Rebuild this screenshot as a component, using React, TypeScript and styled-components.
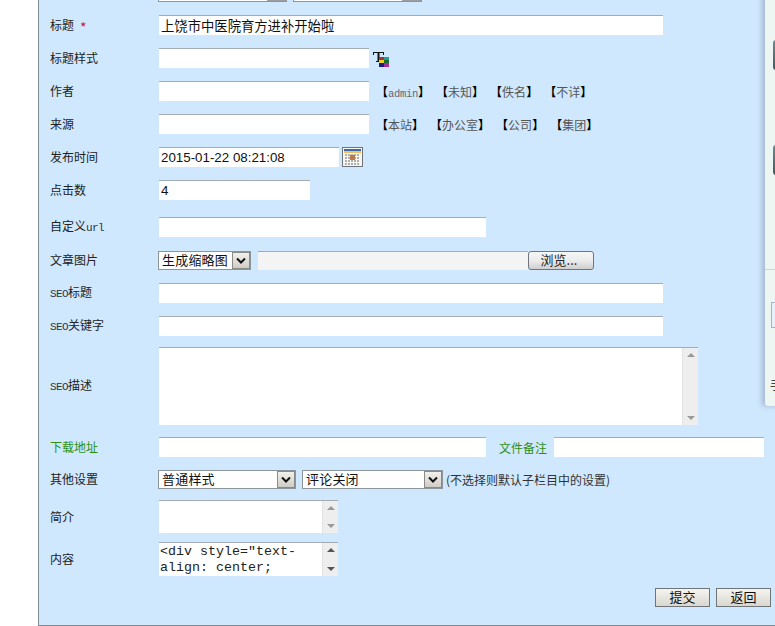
import React from 'react';
import styled, { createGlobalStyle } from 'styled-components';

const cjk = `"Noto Sans CJK SC", "Liberation Sans", sans-serif`;

const GlobalStyle = createGlobalStyle`
  html, body {
    margin: 0;
    padding: 0;
    background: #fff;
    overflow: hidden;
  }
  #root {
    height: 626px;
    overflow: hidden;
  }
`;

const Page = styled.div`
  position: relative;
  width: 775px;
  height: 626px;
  padding-left: 38px;
  box-sizing: border-box;
  overflow: hidden;
  font-family: ${cjk};
  font-size: 12px;
  color: #222;
`;

const Panel = styled.form`
  height: 626px;
  margin: 0;
  box-sizing: border-box;
  background: #d0e8fd;
  border-left: 1px solid #7f8a94;
  border-bottom: 1px solid #7f8a94;
  padding-left: 11px;
  overflow: hidden;
`;

const ClippedRow = styled.div`
  display: flex;
  gap: 6px;
  height: 15px;
  margin-top: -13px;
  margin-left: 108px;
`;

const ClippedSelect = styled.div`
  width: 129px;
  height: 15px;
  box-sizing: border-box;
  background: #fff;
  border: 1px solid #8c949c;
  display: flex;
  justify-content: flex-end;
`;

const ClippedArrow = styled.div`
  width: 19px;
  background: #9a9ea3;
`;

const Row = styled.div<{ $h: number; $mt?: number }>`
  display: flex;
  align-items: center;
  height: ${(p) => p.$h}px;
  margin-top: ${(p) => p.$mt ?? 13}px;
`;

const Label = styled.label<{ $green?: boolean; $up?: boolean }>`
  width: 109px;
  flex: none;
  line-height: 16px;
  margin-top: ${(p) => (p.$up ? -2 : 0)}px;
  color: ${(p) => (p.$green ? '#2f8f12' : '#222')};
`;

const Latin = styled.span`
  font-family: "Liberation Mono", monospace;
  font-size: 11px;
  letter-spacing: -0.6px;
  color: #2c3440;
`;

const Star = styled.span`
  display: inline-block;
  margin-left: 6px;
  font-size: 14px;
  line-height: 12px;
  color: #d0104c;
  transform: translateY(3px);
`;

const Field = styled.input<{ $w: number }>`
  width: ${(p) => p.$w}px;
  height: 20px;
  flex: none;
  box-sizing: border-box;
  padding: 0 2px;
  margin: 0;
  background: #fff;
  border: none;
  border-top: 1px solid #a3acb5;
  outline: none;
  font-family: "Liberation Sans", "Noto Sans CJK SC", sans-serif;
  font-size: 13.33px;
  color: #111;
`;

const TitleField = styled(Field)`
  font-family: ${cjk};
`;

const Hints = styled.div`
  display: flex;
  gap: 6px;
  margin-left: 7px;
  color: #555;
  white-space: nowrap;
`;

const Hint = styled.span`
  display: inline-block;
`;

const Bracket = styled.b`
  color: #000;
  font-weight: 700;
`;

const HintLatin = styled.span`
  font-family: "Liberation Mono", monospace;
  font-size: 10.5px;
  letter-spacing: -0.3px;
  color: #667;
`;

const IconSlot = styled.svg<{ $ml: number }>`
  flex: none;
  margin-left: ${(p) => p.$ml}px;
`;

const SelectBox = styled.div<{ $w: number; $ml?: number }>`
  width: ${(p) => p.$w}px;
  height: 19px;
  flex: none;
  margin-left: ${(p) => p.$ml ?? -1}px;
  box-sizing: border-box;
  display: flex;
  align-items: stretch;
  background: #fff;
  border: 1px solid #8c949c;
`;

const SelectText = styled.span`
  flex: 1;
  padding-left: 3px;
  line-height: 16px;
  font-size: 13px;
  letter-spacing: 0.2px;
  color: #111;
  white-space: nowrap;
`;

const SelectArrow = styled.span`
  width: 18px;
  flex: none;
  display: flex;
  align-items: center;
  justify-content: center;
  box-sizing: border-box;
  background: linear-gradient(#f2f0ea, #cfcdc6);
  border: 1px solid #8a8a86;
`;

const FileBox = styled.div`
  width: 270px;
  height: 19px;
  flex: none;
  margin-left: 7px;
  box-sizing: border-box;
  background: #f4f4f4;
  border-top: 1px solid #a3acb5;
`;

const BrowseButton = styled.button`
  width: 66px;
  height: 19px;
  flex: none;
  padding: 0 4px 3px 0;
  box-sizing: border-box;
  border: 1px solid #70767c;
  border-radius: 3px;
  background: linear-gradient(#f6f6f6 0%, #ececec 50%, #cfcfcf 100%);
  font-family: ${cjk};
  font-size: 13px;
  line-height: 15px;
  color: #222;
`;

const AreaWrap = styled.div<{ $w: number; $h: number }>`
  width: ${(p) => p.$w}px;
  height: ${(p) => p.$h}px;
  flex: none;
  display: flex;
  background: #fff;
  border-top: 1px solid #a3acb5;
  box-sizing: border-box;
`;

const Area = styled.textarea`
  flex: 1;
  min-width: 0;
  margin: 0;
  padding: 1px 1px;
  border: none;
  outline: none;
  resize: none;
  overflow: hidden;
  background: #fff;
  font-family: "Liberation Mono", monospace;
  font-size: 13.33px;
  line-height: 16px;
  color: #222;
`;

const Scrollbar = styled.div`
  width: 16px;
  flex: none;
  display: flex;
  flex-direction: column;
  justify-content: space-between;
  align-items: center;
  padding: 5px 0;
  box-sizing: border-box;
  background: #eeeeee;
  border-left: 1px solid #e2e2e2;
`;

const Arrow = styled.i<{ $down?: boolean; $dark?: boolean }>`
  width: 0;
  height: 0;
  border-left: 4px solid transparent;
  border-right: 4px solid transparent;
  ${(p) =>
    p.$down
      ? `border-top: 4px solid ${p.$dark ? '#555' : '#999'};`
      : `border-bottom: 4px solid ${p.$dark ? '#555' : '#999'};`}
`;

const NoteLabel = styled.label`
  width: 48px;
  flex: none;
  margin-left: 13px;
  margin-right: 7px;
  white-space: nowrap;
  color: #2f8f12;
`;

const SelectNote = styled.span`
  margin-left: 3px;
  margin-top: -1px;
  color: #333;
  white-space: nowrap;
`;

const Actions = styled.div`
  display: flex;
  justify-content: flex-end;
  gap: 6px;
  margin-top: 12px;
  padding-right: 4px;
`;

const ActionButton = styled.button`
  width: 55px;
  height: 19px;
  padding: 0 0 2px;
  box-sizing: border-box;
  border: 1px solid #6f7478;
  background: linear-gradient(#f5f4f0, #d9d7d0);
  font-family: ${cjk};
  font-size: 13px;
  line-height: 15px;
  color: #111;
`;

const SidePanel = styled.aside`
  position: absolute;
  top: -4px;
  left: 765px;
  width: 20px;
  height: 410px;
  box-sizing: border-box;
  background: #edf6f2;
  border-radius: 0 0 0 3px;
  box-shadow: -3px 0 5px rgba(120, 140, 170, 0.5);
`;

const SideChip = styled.div<{ $top: number }>`
  position: absolute;
  top: ${(p) => p.$top}px;
  left: 8px;
  width: 10px;
  height: 30px;
  border-radius: 3px 0 0 3px;
  background: linear-gradient(#6f8a92, #3f5a64);
`;

const SideRule = styled.div`
  position: absolute;
  top: 273px;
  left: 0;
  width: 100%;
  height: 1px;
  background: #cfd6d4;
`;

const SideBox = styled.div`
  position: absolute;
  top: 306px;
  left: 6px;
  width: 14px;
  height: 26px;
  box-sizing: border-box;
  background: #e6f1fb;
  border: 1px solid #a3b4c8;
`;

const SideGlyph = styled.span`
  position: absolute;
  top: 382px;
  left: 5px;
  font-size: 12px;
  line-height: 14px;
  color: #444;
`;

const Chevron = () => (
  <svg width="10" height="7" viewBox="0 0 10 7">
    <path d="M1 1.5 L5 5.5 L9 1.5" fill="none" stroke="#111" strokeWidth="2" />
  </svg>
);

const ColorIcon = () => (
  <IconSlot $ml={3} width="17" height="17" viewBox="0 0 17 17">
    <path d="M1 2h11v3h-1V3H7.5v8H9v1H4v-1h1.5V3H2v2H1z" fill="#111" />
    <rect x="7" y="7" width="5" height="3" fill="#a8323c" />
    <rect x="12" y="7" width="5" height="3" fill="#2a9a96" />
    <rect x="7" y="10" width="5" height="3" fill="#f0d020" />
    <rect x="12" y="10" width="5" height="3" fill="#1e6a2a" />
    <rect x="7" y="13" width="5" height="4" fill="#1c1c80" />
    <rect x="12" y="13" width="5" height="4" fill="#a030a0" />
  </IconSlot>
);

const CalendarIcon = () => (
  <IconSlot $ml={3} width="21" height="20" viewBox="0 0 21 20">
    <rect x="0.5" y="0.5" width="20" height="19" fill="#f6f6f2" stroke="#6d7378" />
    <rect x="2" y="2" width="17" height="2" fill="#3a6aa8" />
    <rect x="2" y="4" width="17" height="2" fill="#f0c060" />
    {[7, 10, 13, 16].map((y) =>
      [3, 6, 9, 12, 15].map((x) => (
        <rect key={`${x}-${y}`} x={x} y={y} width="2" height="2" fill="#b0b0ac" />
      )),
    )}
    <rect x="8" y="8" width="5" height="5" fill="#b87a48" />
  </IconSlot>
);

const authors = ['未知', '佚名', '不详'];
const sources = ['本站', '办公室', '公司', '集团'];

const HintItem = ({ children }: { children: React.ReactNode }) => (
  <Hint>
    <Bracket>【</Bracket>
    {children}
    <Bracket>】</Bracket>
  </Hint>
);

const ScrollArea = ({ w, h, value, dark }: { w: number; h: number; value?: string; dark?: boolean }) => (
  <AreaWrap $w={w} $h={h}>
    <Area defaultValue={value} />
    <Scrollbar>
      <Arrow $dark={dark} />
      <Arrow $down $dark={dark} />
    </Scrollbar>
  </AreaWrap>
);

const App: React.FC = () => {
  return (
    <Page>
      <GlobalStyle />
      <Panel>
        <ClippedRow>
          <ClippedSelect>
            <ClippedArrow />
          </ClippedSelect>
          <ClippedSelect>
            <ClippedArrow />
          </ClippedSelect>
        </ClippedRow>

        <Row $h={20} $mt={13}>
          <Label>
            标题<Star>*</Star>
          </Label>
          <TitleField $w={504} defaultValue="上饶市中医院育方进补开始啦" />
        </Row>
        <Row $h={20}>
          <Label>标题样式</Label>
          <Field $w={210} />
          <ColorIcon />
        </Row>
        <Row $h={20}>
          <Label>作者</Label>
          <Field $w={210} />
          <Hints>
            <HintItem>
              <HintLatin>admin</HintLatin>
            </HintItem>
            {authors.map((a) => (
              <HintItem key={a}>{a}</HintItem>
            ))}
          </Hints>
        </Row>
        <Row $h={20}>
          <Label>来源</Label>
          <Field $w={210} />
          <Hints>
            {sources.map((s) => (
              <HintItem key={s}>{s}</HintItem>
            ))}
          </Hints>
        </Row>
        <Row $h={20}>
          <Label>发布时间</Label>
          <Field $w={180} defaultValue="2015-01-22 08:21:08" />
          <CalendarIcon />
        </Row>
        <Row $h={20}>
          <Label>点击数</Label>
          <Field $w={151} defaultValue="4" />
        </Row>
        <Row $h={20} $mt={17}>
          <Label>
            自定义<Latin>url</Latin>
          </Label>
          <Field $w={327} />
        </Row>
        <Row $h={19} $mt={14}>
          <Label $up>文章图片</Label>
          <SelectBox $w={93}>
            <SelectText>生成缩略图</SelectText>
            <SelectArrow>
              <Chevron />
            </SelectArrow>
          </SelectBox>
          <FileBox />
          <BrowseButton type="button">浏览...</BrowseButton>
        </Row>
        <Row $h={20}>
          <Label>
            <Latin>SEO</Latin>标题
          </Label>
          <Field $w={504} />
        </Row>
        <Row $h={20}>
          <Label>
            <Latin>SEO</Latin>关键字
          </Label>
          <Field $w={504} />
        </Row>
        <Row $h={78} $mt={11}>
          <Label>
            <Latin>SEO</Latin>描述
          </Label>
          <ScrollArea w={539} h={78} />
        </Row>
        <Row $h={20} $mt={12}>
          <Label $green>下载地址</Label>
          <Field $w={327} />
          <NoteLabel>文件备注</NoteLabel>
          <Field $w={210} />
        </Row>
        <Row $h={19} $mt={13}>
          <Label $up>其他设置</Label>
          <SelectBox $w={138}>
            <SelectText>普通样式</SelectText>
            <SelectArrow>
              <Chevron />
            </SelectArrow>
          </SelectBox>
          <SelectBox $w={141} $ml={6}>
            <SelectText>评论关闭</SelectText>
            <SelectArrow>
              <Chevron />
            </SelectArrow>
          </SelectBox>
          <SelectNote>(不选择则默认子栏目中的设置)</SelectNote>
        </Row>
        <Row $h={33} $mt={11}>
          <Label>简介</Label>
          <ScrollArea w={179} h={33} />
        </Row>
        <Row $h={34} $mt={9}>
          <Label>内容</Label>
          <ScrollArea w={179} h={34} dark value={'<div style="text-align: center;'} />
        </Row>
        <Actions>
          <ActionButton type="button">提交</ActionButton>
          <ActionButton type="button">返回</ActionButton>
        </Actions>
      </Panel>
      <SidePanel>
        <SideChip $top={44} />
        <SideChip $top={149} />
        <SideRule />
        <SideBox />
        <SideGlyph>手</SideGlyph>
      </SidePanel>
    </Page>
  );
};

export default App;
